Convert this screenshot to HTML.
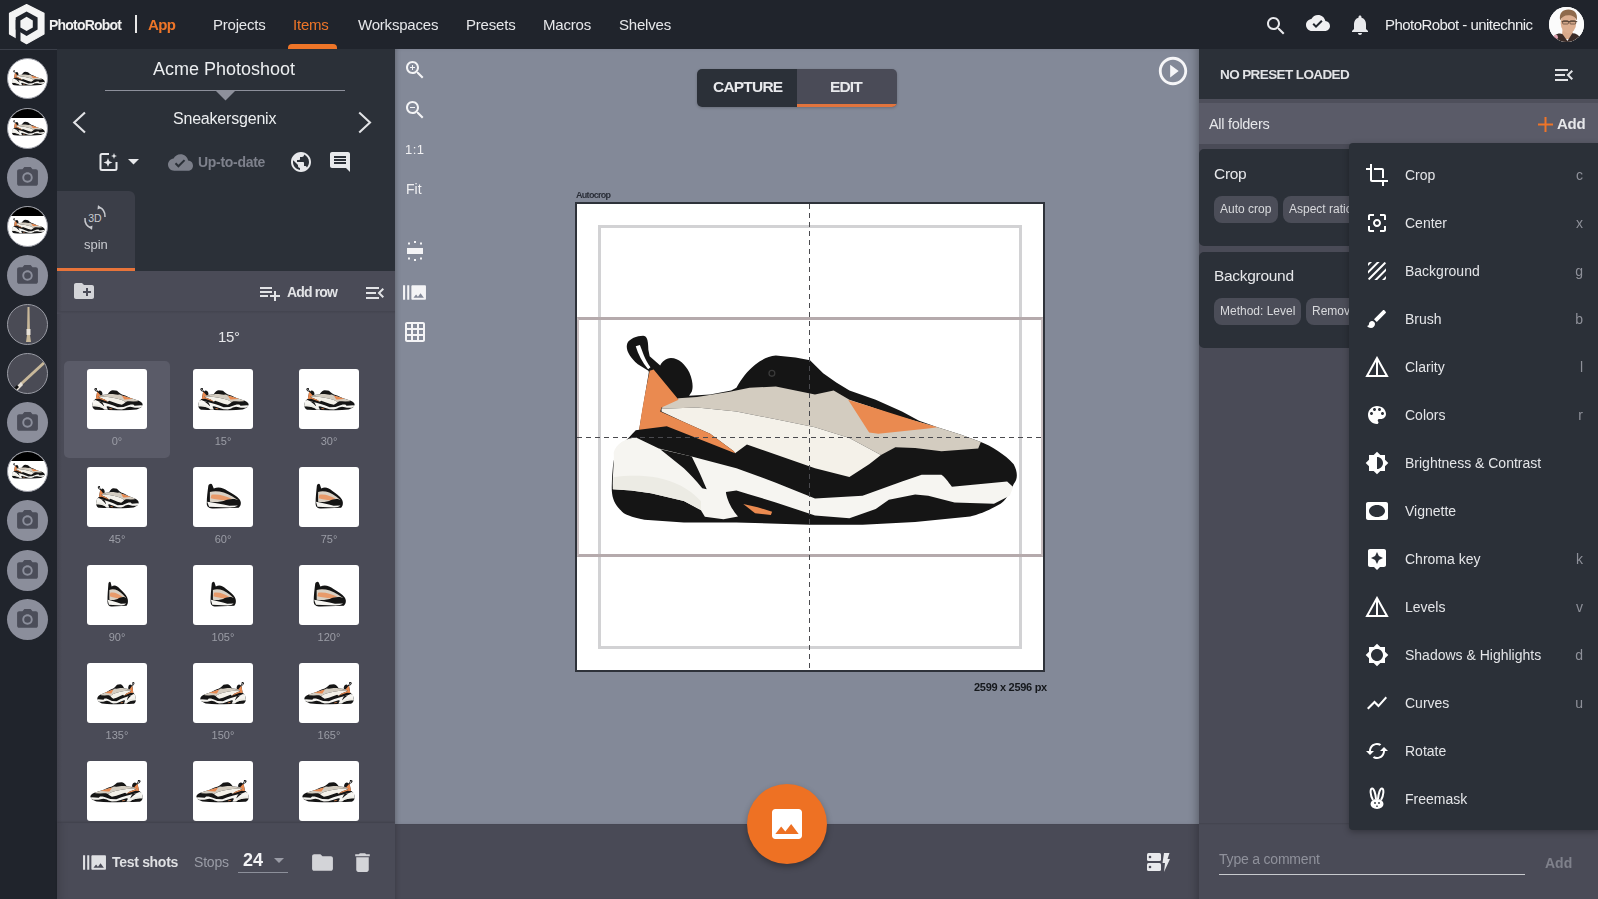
<!DOCTYPE html>
<html><head><meta charset="utf-8">
<style>
*{box-sizing:border-box;margin:0;padding:0}
html,body{width:1598px;height:899px;overflow:hidden;background:#20242c;font-family:"Liberation Sans",sans-serif;-webkit-font-smoothing:antialiased}
.t,.nav,.mi,.sc,.lbl,.chip{will-change:transform}
.a{position:absolute}
.t{position:absolute;white-space:nowrap;line-height:1}
.nav{position:absolute;top:17px;font-size:15px;line-height:1;color:#e6e7ea;white-space:nowrap;letter-spacing:-0.2px}
.circ{position:absolute;left:7px;width:41px;height:41px;border-radius:50%;overflow:hidden}
.thumb{position:absolute;width:60px;height:60px;background:#fff;border-radius:3px;overflow:hidden}
.lbl{position:absolute;width:60px;text-align:center;font-size:11px;line-height:1;color:#9b9da6}
.chip{position:absolute;height:27px;border-radius:8px;background:#4b4d58;color:#d8d9dc;font-size:12px;line-height:27px;padding:0 6px;white-space:nowrap;overflow:hidden}
.mi{position:absolute;left:1405px;font-size:14px;line-height:1;color:#e4e5e8;white-space:nowrap}
.sc{position:absolute;left:1560px;width:23px;text-align:right;font-size:14px;line-height:1;color:#8e9099}
</style></head><body>
<svg width="0" height="0" style="position:absolute"><defs><symbol id="shoe" viewBox="0 0 1598 799">
<path fill="#151515" d="M184 193 L144 168 C110 140 96 110 104 88 C112 72 140 60 164 60 C178 62 183 70 184 113 L189 138 L229 173 C236 160 250 146 270 145 C300 146 325 170 340 200 C355 235 354 260 349 273 L339 288 L419 283 L499 268 L519 258 C540 220 560 195 590 170 C615 150 640 138 669 135 L744 143 L799 153 L849 203 L899 238 L949 268 L1049 303 L1149 348 L1214 383 L1284 408 L1374 437 L1449 464 C1490 480 1540 510 1574 549 C1590 580 1590 605 1574 624 C1560 660 1540 690 1524 699 C1480 725 1430 745 1399 749 L1199 769 L999 779 L799 779 L519 770 L319 770 L169 760 C120 750 90 740 79 724 C55 700 47 680 45 650 C44 620 46 590 49 560 C52 530 58 510 64 500 C80 475 100 458 136 419 L149 418 L186 198 Z"/>
<path fill="#ffffff" d="M136 100 L152 95 C160 115 170 150 192 180 L183 187 C160 160 145 130 136 100 Z"/>
<path fill="#f6f5f1" d="M52 505 C60 470 100 449 137 447 L224 489 L349 519 L519 564 L669 619 L818 679 L999 669 L1149 614 L1224 589 L1299 589 C1320 605 1330 625 1339 634 L1549 614 L1572 635 L1559 669 L1499 699 L1349 694 L1249 669 L1199 664 L1099 684 L1049 719 L949 754 L818 744 L669 694 L569 664 L519 649 L479 654 C482 680 500 720 525 748 L470 758 L399 749 L384 724 L319 689 L194 659 L119 649 L49 644 C46 600 55 540 52 505 Z"/>
<path fill="#ecebe4" d="M52 598 C100 592 160 590 220 600 C280 612 340 640 384 690 L384 722 L319 689 L194 659 L119 649 L49 644 Z"/>
<path fill="#151515" d="M229 492 L349 519 C370 560 392 610 406 644 L389 640 C365 610 340 585 319 564 Z"/>
<path fill="#d3ccc0" d="M239 328 L299 298 L369 293 L494 273 L569 258 L669 253 L818 283 L889 268 L949 303 L1024 328 L1124 363 L1214 388 L1284 408 L1374 437 L1449 464 L1439 489 L1299 499 L1199 487 L1124 484 L1069 514 L949 449 L818 408 L669 378 L519 348 L369 333 L234 338 Z"/>
<path fill="#f4f1e9" d="M234 338 L369 333 L519 348 L669 378 L818 408 L949 449 L1069 514 L1024 549 L949 597 L818 564 L559 474 L514 507 L509 499 L419 433 L319 388 L234 348 Z"/>
<path fill="#ea8a50" d="M189 193 L204 188 L299 303 L234 333 L229 348 L319 388 L419 433 L509 499 L514 507 L254 404 L149 418 C160 340 175 260 189 193 Z"/>
<path fill="#ea8a50" d="M944 303 L1024 328 L1214 388 L1284 408 L1249 413 L1059 433 L1024 428 Z"/>
<path fill="#ea8a50" d="M545 700 L600 712 L655 730 L650 742 L590 735 Z"/>
<circle cx="654" cy="203" r="11" fill="none" stroke="#3a3a3a" stroke-width="5"/>
</symbol>

<g id="shoeq">
<path fill="#141414" d="M13 17 C14 15 17 14 18 16 L20 20 C26 18 32 19 38 23 C44 26 50 29 53 32 C56 35 55 40 52 41.5 L20 42.5 C14 42.5 10.5 40.5 11 36 C11 30 12 24 13 17 Z"/>
<path fill="#d8d0c4" d="M15 24 C24 22 34 24 44 29 L51 33 L36 33.5 C30 34.5 24 36 15 35 Z"/>
<path fill="#e89a6a" d="M17 27 C26 26 34 28 43 31.5 L35 33.5 C28 33 22 32 16 31 Z"/>
<path fill="#141414" d="M33 34 C40 31.5 48 31 53 34 L53.5 39 L37 39.5 Z"/>
<path fill="#f6f5f1" d="M11.5 35 C20 36 30 37.5 40 39.5 L51 39 C49 40.5 45 41 41 41.3 L14 40.5 Z"/>
</g></defs></svg>

<div class="a" style="left:0;top:0;width:1598px;height:49px;background:#20242c"></div>
<svg class="a" style="left:0;top:0" width="50" height="49" viewBox="0 0 50 49">
<path d="M26.6 4.6 L44 13.2 L44 34 L26.6 43.7 L9.5 34 L9.5 13.2 Z" fill="#f4f4f4" stroke="#f4f4f4" stroke-width="1.2" stroke-linejoin="round"/>
<path d="M26.6 11.5 L37.6 17.4 L37.6 29.6 L26.6 36 L15.7 29.6 L15.7 17.4 Z" fill="#20242c"/>
<path d="M15.7 20 L20.5 20 L20.5 44 L15.7 41 Z" fill="#20242c"/>
<path d="M26.6 16.8 L32.8 20.4 L32.8 27.4 L26.6 31 L20.4 27.4 L20.4 20.4 Z" fill="#f4f4f4"/>
</svg>
<div class="t" style="left:49px;top:18px;font-size:14px;font-weight:bold;color:#f0f0f0;letter-spacing:-0.8px">PhotoRobot</div>
<div class="a" style="left:135px;top:15px;width:2px;height:18px;background:#e8e8e8"></div>
<div class="t" style="left:148px;top:17px;font-size:15px;font-weight:bold;color:#ee7528;letter-spacing:-0.6px">App</div>
<div class="nav" style="left:213px;color:#e6e7ea">Projects</div>
<div class="nav" style="left:293px;color:#ee7528">Items</div>
<div class="nav" style="left:358px;color:#e6e7ea">Workspaces</div>
<div class="nav" style="left:466px;color:#e6e7ea">Presets</div>
<div class="nav" style="left:543px;color:#e6e7ea">Macros</div>
<div class="nav" style="left:619px;color:#e6e7ea">Shelves</div>
<div class="a" style="left:288px;top:44px;width:49px;height:5px;background:#ee7528;border-radius:4px 4px 0 0"></div>
<svg class="a" style="left:1264px;top:14px" width="24" height="24" viewBox="0 0 24 24"><path fill="#e8e9ec" d="M15.5 14h-.79l-.28-.27C15.41 12.59 16 11.11 16 9.5 16 5.91 13.09 3 9.5 3S3 5.91 3 9.5 5.91 16 9.5 16c1.61 0 3.09-.59 4.23-1.57l.27.28v.79l5 4.99L20.49 19l-4.99-5zm-6 0C7.01 14 5 11.99 5 9.5S7.01 5 9.5 5 14 7.01 14 9.5 11.99 14 9.5 14z"/></svg>
<svg class="a" style="left:1306px;top:11px" width="24" height="24" viewBox="0 0 24 24"><path fill="#f0f0f2" d="M19.35 10.04C18.67 6.59 15.64 4 12 4 9.11 4 6.6 5.64 5.35 8.04 2.34 8.36 0 10.91 0 14c0 3.31 2.69 6 6 6h13c2.76 0 5-2.24 5-5 0-2.64-2.05-4.78-4.65-4.96zM10 17l-3.5-3.5 1.41-1.41L10 14.17 15.18 9l1.41 1.41L10 17z"/></svg>
<svg class="a" style="left:1348px;top:13px" width="24" height="24" viewBox="0 0 24 24"><path fill="#e8e9ec" d="M12 22c1.1 0 2-.9 2-2h-4c0 1.1.89 2 2 2zm6-6v-5c0-3.07-1.64-5.64-4.5-6.32V4c0-.83-.67-1.5-1.5-1.5s-1.5.67-1.5 1.5v.68C7.63 5.36 6 7.92 6 11v5l-2 2v1h16v-1l-2-2z"/></svg>
<div class="t" style="left:1385px;top:17px;font-size:15px;color:#eeeff1;letter-spacing:-0.55px">PhotoRobot - unitechnic</div>
<div class="a" style="left:1549px;top:7px;width:35px;height:35px;border-radius:50%;background:#fafafa;overflow:hidden">
<svg width="35" height="35" viewBox="0 0 36 36"><rect width="36" height="36" fill="#fbfbfb"/>
<path d="M14 22 L24 22 L25 33 L13 33 Z" fill="#d9a98a"/>
<ellipse cx="20" cy="16.5" rx="8" ry="10.5" fill="#dcae90"/>
<path d="M11.5 14 C10 6 14 2.5 20 2.5 C26 2.5 30 6 28.5 14 C27 10 24 8.5 20 8.5 C15.5 8.5 13 10.5 11.5 14 Z" fill="#8f6a4c"/>
<path d="M13 15 H29" stroke="#5a4638" stroke-width="1"/><rect x="14" y="14" width="6" height="3.5" rx="1" fill="none" stroke="#5a4638" stroke-width="0.8"/><rect x="21.5" y="14" width="6" height="3.5" rx="1" fill="none" stroke="#5a4638" stroke-width="0.8"/>
<path d="M3 36 L6 29 C9 27 12 27 14 28 L19 35 L24 27 C28 27 31 29 33 33 L34 36 Z" fill="#3a2b27"/>
<ellipse cx="7" cy="31" rx="2.2" ry="2.5" fill="#e2a3b2"/>
</svg></div>
<div class="a" style="left:0;top:49px;width:57px;height:850px;background:#20242c;border-top:1px solid #3b3f49"></div>
<div class="circ" style="top:58px;background:#fff;border:1px solid #9a9ca5"><svg class="a" style="left:3px;top:10px" width="34" height="17" viewBox="0 0 1598 799"><use href="#shoe"/></svg></div>
<div class="circ" style="top:108px;background:#fff;border:1px solid #9a9ca5"><div class="a" style="left:0;top:0;width:41px;height:9px;background:#000"></div><svg class="a" style="left:3px;top:10px" width="34" height="17" viewBox="0 0 1598 799"><use href="#shoe"/></svg></div>
<div class="circ" style="top:157px;background:#8b8e9b"><svg class="a" style="left:8px;top:8px" width="25" height="25" viewBox="0 0 24 24"><path fill="#4b4d59" d="M12 15.2a3.2 3.2 0 1 0 0-6.4 3.2 3.2 0 0 0 0 6.4z M9 2L7.17 4H4c-1.1 0-2 .9-2 2v12c0 1.1.9 2 2 2h16c1.1 0 2-.9 2-2V6c0-1.1-.9-2-2-2h-3.17L15 2H9zm3 15c-2.76 0-5-2.24-5-5s2.24-5 5-5 5 2.24 5 5-2.24 5-5 5z"/></svg></div>
<div class="circ" style="top:206px;background:#fff;border:1px solid #9a9ca5"><div class="a" style="left:0;top:0;width:41px;height:9px;background:#000"></div><svg class="a" style="left:3px;top:10px" width="34" height="17" viewBox="0 0 1598 799"><use href="#shoe"/></svg></div>
<div class="circ" style="top:255px;background:#8b8e9b"><svg class="a" style="left:8px;top:8px" width="25" height="25" viewBox="0 0 24 24"><path fill="#4b4d59" d="M12 15.2a3.2 3.2 0 1 0 0-6.4 3.2 3.2 0 0 0 0 6.4z M9 2L7.17 4H4c-1.1 0-2 .9-2 2v12c0 1.1.9 2 2 2h16c1.1 0 2-.9 2-2V6c0-1.1-.9-2-2-2h-3.17L15 2H9zm3 15c-2.76 0-5-2.24-5-5s2.24-5 5-5 5 2.24 5 5-2.24 5-5 5z"/></svg></div>
<div class="circ" style="top:304px;background:#4a4b55;border:1px solid #9a9ca5"><svg class="a" style="left:0;top:0" width="41" height="41" viewBox="0 0 41 41"><path d="M19.5 2 L21.5 2 L22 30 L23 37 L18 37 L19 30 Z" fill="#c8b89a"/><rect x="18.5" y="24" width="4" height="6" fill="#e8e2d8"/></svg></div>
<div class="circ" style="top:353px;background:#4a4b55;border:1px solid #9a9ca5"><svg class="a" style="left:0;top:0" width="41" height="41" viewBox="0 0 41 41"><path d="M37 6 L39 8 L14 31 L12 29 Z" fill="#c8b89a"/><path d="M13 28 L15 31 L9 37 L6 35 Z" fill="#e8e2d8"/><path d="M9 31 L11 33 L8 36 L6 34Z" fill="#111"/></svg></div>
<div class="circ" style="top:402px;background:#8b8e9b"><svg class="a" style="left:8px;top:8px" width="25" height="25" viewBox="0 0 24 24"><path fill="#4b4d59" d="M12 15.2a3.2 3.2 0 1 0 0-6.4 3.2 3.2 0 0 0 0 6.4z M9 2L7.17 4H4c-1.1 0-2 .9-2 2v12c0 1.1.9 2 2 2h16c1.1 0 2-.9 2-2V6c0-1.1-.9-2-2-2h-3.17L15 2H9zm3 15c-2.76 0-5-2.24-5-5s2.24-5 5-5 5 2.24 5 5-2.24 5-5 5z"/></svg></div>
<div class="circ" style="top:451px;background:#fff;border:1px solid #9a9ca5"><div class="a" style="left:0;top:0;width:41px;height:9px;background:#000"></div><svg class="a" style="left:3px;top:10px" width="34" height="17" viewBox="0 0 1598 799"><use href="#shoe"/></svg></div>
<div class="circ" style="top:500px;background:#8b8e9b"><svg class="a" style="left:8px;top:8px" width="25" height="25" viewBox="0 0 24 24"><path fill="#4b4d59" d="M12 15.2a3.2 3.2 0 1 0 0-6.4 3.2 3.2 0 0 0 0 6.4z M9 2L7.17 4H4c-1.1 0-2 .9-2 2v12c0 1.1.9 2 2 2h16c1.1 0 2-.9 2-2V6c0-1.1-.9-2-2-2h-3.17L15 2H9zm3 15c-2.76 0-5-2.24-5-5s2.24-5 5-5 5 2.24 5 5-2.24 5-5 5z"/></svg></div>
<div class="circ" style="top:550px;background:#8b8e9b"><svg class="a" style="left:8px;top:8px" width="25" height="25" viewBox="0 0 24 24"><path fill="#4b4d59" d="M12 15.2a3.2 3.2 0 1 0 0-6.4 3.2 3.2 0 0 0 0 6.4z M9 2L7.17 4H4c-1.1 0-2 .9-2 2v12c0 1.1.9 2 2 2h16c1.1 0 2-.9 2-2V6c0-1.1-.9-2-2-2h-3.17L15 2H9zm3 15c-2.76 0-5-2.24-5-5s2.24-5 5-5 5 2.24 5 5-2.24 5-5 5z"/></svg></div>
<div class="circ" style="top:599px;background:#8b8e9b"><svg class="a" style="left:8px;top:8px" width="25" height="25" viewBox="0 0 24 24"><path fill="#4b4d59" d="M12 15.2a3.2 3.2 0 1 0 0-6.4 3.2 3.2 0 0 0 0 6.4z M9 2L7.17 4H4c-1.1 0-2 .9-2 2v12c0 1.1.9 2 2 2h16c1.1 0 2-.9 2-2V6c0-1.1-.9-2-2-2h-3.17L15 2H9zm3 15c-2.76 0-5-2.24-5-5s2.24-5 5-5 5 2.24 5 5-2.24 5-5 5z"/></svg></div>
<div class="a" style="left:57px;top:49px;width:338px;height:222px;background:#2b3038"></div>
<div class="t" style="left:153px;top:60px;font-size:18px;color:#eceef0;letter-spacing:0px">Acme Photoshoot</div>
<div class="a" style="left:105px;top:90px;width:240px;height:1px;background:#8d909b"></div>
<svg class="a" style="left:215px;top:90px" width="21" height="11" viewBox="0 0 21 11"><path d="M0 0 H21 L10.5 10.5 Z" fill="#8d909b"/></svg>
<div class="t" style="left:173px;top:111px;font-size:16px;color:#eceef0;letter-spacing:-0.2px">Sneakersgenix</div>
<svg class="a" style="left:70px;top:111px" width="18" height="23" viewBox="0 0 18 23"><path d="M14.2 2.2 L4.2 11.5 L14.2 20.8" fill="none" stroke="#e2e3e6" stroke-width="2.1" stroke-linecap="square"/></svg>
<svg class="a" style="left:356px;top:111px" width="18" height="23" viewBox="0 0 18 23"><path d="M4 2.2 L14 11.5 L4 20.8" fill="none" stroke="#e2e3e6" stroke-width="2.1" stroke-linecap="square"/></svg>
<svg class="a" style="left:99px;top:152px" width="20" height="20" viewBox="0 0 20 20">
<path d="M10 2 H3 Q1.5 2 1.5 3.5 V16.5 Q1.5 18 3 18 H16 Q17.5 18 17.5 16.5 V10" fill="none" stroke="#e8e9ec" stroke-width="2"/>
<path d="M9 6 L10.2 9.3 L13.5 10.5 L10.2 11.7 L9 15 L7.8 11.7 L4.5 10.5 L7.8 9.3Z" fill="#e8e9ec"/>
<path d="M15 1 L15.8 3.2 L18 4 L15.8 4.8 L15 7 L14.2 4.8 L12 4 L14.2 3.2Z" fill="#e8e9ec"/>
</svg>
<svg class="a" style="left:128px;top:159px" width="11" height="6" viewBox="0 0 11 6"><path d="M0 0 H11 L5.5 5.5Z" fill="#e8e9ec"/></svg>
<svg class="a" style="left:168px;top:150px" width="25" height="25" viewBox="0 0 24 24"><path fill="#7b7e89" d="M19.35 10.04C18.67 6.59 15.64 4 12 4 9.11 4 6.6 5.64 5.35 8.04 2.34 8.36 0 10.91 0 14c0 3.31 2.69 6 6 6h13c2.76 0 5-2.24 5-5 0-2.64-2.05-4.78-4.65-4.96zM10 17l-3.5-3.5 1.41-1.41L10 14.17 15.18 9l1.41 1.41L10 17z"/></svg>
<div class="t" style="left:198px;top:155px;font-size:14px;font-weight:bold;color:#7e818c;letter-spacing:-0.3px">Up-to-date</div>
<svg class="a" style="left:289px;top:150px" width="24" height="24" viewBox="0 0 24 24"><path fill="#e8e9ec" d="M12 2C6.48 2 2 6.48 2 12s4.48 10 10 10 10-4.48 10-10S17.52 2 12 2zm-1 17.93c-3.95-.49-7-3.85-7-7.930 0-.62.08-1.21.21-1.79L9 15v1c0 1.1.9 2 2 2v1.93zm6.9-2.54c-.26-.81-1-1.39-1.9-1.39h-1v-3c0-.55-.45-1-1-1H8v-2h2c.55 0 1-.45 1-1V7h2c1.1 0 2-.9 2-2v-.41c2.93 1.19 5 4.060 5 7.41 0 2.08-.8 3.97-2.1 5.39z"/></svg>
<svg class="a" style="left:328px;top:150px" width="24" height="24" viewBox="0 0 24 24"><path fill="#e8e9ec" d="M21.99 4c0-1.1-.89-2-1.99-2H4c-1.1 0-2 .9-2 2v12c0 1.1.9 2 2 2h14l4 4-.01-18zM18 14H6v-2h12v2zm0-3H6V9h12v2zm0-3H6V6h12v2z"/></svg>
<div class="a" style="left:57px;top:191px;width:78px;height:80px;background:#3b3e48;border-radius:0 6px 0 0;border-bottom:3px solid #e8743a"></div>
<svg class="a" style="left:82px;top:204px" width="26" height="27" viewBox="0 0 26 27">
<path d="M17 3 A10 10 0 0 1 23 13" fill="none" stroke="#c8cacf" stroke-width="1.5"/><path d="M16 1 L19 4 L15.5 5.5Z" fill="#c8cacf"/>
<path d="M9 24 A10 10 0 0 1 3 14" fill="none" stroke="#c8cacf" stroke-width="1.5"/><path d="M10 26 L7 23 L10.5 21.5Z" fill="#c8cacf"/>
<text x="13" y="17.5" text-anchor="middle" font-family="Liberation Sans" font-size="10.5" fill="#c8cacf">3D</text>
</svg>
<div class="t" style="left:84px;top:238px;font-size:13px;color:#c9cbd0">spin</div>
<div class="a" style="left:57px;top:271px;width:338px;height:628px;background:#4a4b57"></div>
<div class="a" style="left:57px;top:271px;width:5px;height:628px;background:linear-gradient(90deg,#42434e,#4a4b57)"></div>
<div class="a" style="left:57px;top:311px;width:338px;height:3px;background:linear-gradient(#43444f,#4a4b57)"></div>
<svg class="a" style="left:72px;top:279px" width="24" height="24" viewBox="0 0 24 24"><path fill="#d3d4d8" d="M20 6h-8l-2-2H4c-1.11 0-1.99.89-1.99 2L2 18c0 1.11.89 2 2 2h16c1.11 0 2-.89 2-2V8c0-1.110-.89-2-2-2zm-1 8h-3v3h-2v-3h-3v-2h3V9h2v3h3v2z"/></svg>
<svg class="a" style="left:258px;top:281px" width="24" height="24" viewBox="0 0 24 24"><path fill="#e2e3e6" d="M14 10H2v2h12v-2zm0-4H2v2h12V6zm4 8v-4h-2v4h-4v2h4v4h2v-4h4v-2h-4zM2 16h8v-2H2v2z"/></svg>
<div class="t" style="left:287px;top:285px;font-size:14px;font-weight:bold;color:#e2e3e6;letter-spacing:-0.85px">Add row</div>
<svg class="a" style="left:363px;top:281px" width="24" height="24" viewBox="0 0 24 24"><path fill="#e2e3e6" d="M3 18h13v-2H3v2zm0-5h10v-2H3v2zm0-7v2h13V6H3zm18 9.59L17.42 12 21 8.41 19.59 7l-5 5 5 5L21 15.59z"/></svg>
<div class="t" style="left:218px;top:329px;font-size:15px;color:#e6e7ea;letter-spacing:-0.3px">15°</div>
<div class="a" style="left:64px;top:361px;width:106px;height:97px;background:#5a5b68;border-radius:5px"></div>
<div class="thumb" style="left:87px;top:369px"><svg class="a" style="left:4.0px;top:16.5px;" width="52" height="25" viewBox="0 0 1598 799" preserveAspectRatio="none"><use href="#shoe"/></svg></div>
<div class="lbl" style="left:87px;top:436px">0°</div>
<div class="thumb" style="left:193px;top:369px"><svg class="a" style="left:4.0px;top:16.5px;" width="52" height="25" viewBox="0 0 1598 799" preserveAspectRatio="none"><use href="#shoe"/></svg></div>
<div class="lbl" style="left:193px;top:436px">15°</div>
<div class="thumb" style="left:299px;top:369px"><svg class="a" style="left:4.0px;top:16.5px;" width="52" height="25" viewBox="0 0 1598 799" preserveAspectRatio="none"><use href="#shoe"/></svg></div>
<div class="lbl" style="left:299px;top:436px">30°</div>
<div class="thumb" style="left:87px;top:467px"><svg class="a" style="left:8.0px;top:16.5px;" width="44" height="25" viewBox="0 0 1598 799" preserveAspectRatio="none"><use href="#shoe"/></svg></div>
<div class="lbl" style="left:87px;top:534px">45°</div>
<div class="thumb" style="left:193px;top:467px"><svg class="a" style="left:12.5px;top:16px;" width="35" height="26" viewBox="10 14 45 29" preserveAspectRatio="none"><use href="#shoeq"/></svg></div>
<div class="lbl" style="left:193px;top:534px">60°</div>
<div class="thumb" style="left:299px;top:467px"><svg class="a" style="left:16.0px;top:16px;" width="28" height="26" viewBox="10 14 45 29" preserveAspectRatio="none"><use href="#shoeq"/></svg></div>
<div class="lbl" style="left:299px;top:534px">75°</div>
<div class="thumb" style="left:87px;top:565px"><svg class="a" style="left:19.5px;top:16px;" width="21" height="26" viewBox="10 14 45 29" preserveAspectRatio="none"><use href="#shoeq"/></svg></div>
<div class="lbl" style="left:87px;top:632px">90°</div>
<div class="thumb" style="left:193px;top:565px"><svg class="a" style="left:17.0px;top:16px;" width="26" height="26" viewBox="10 14 45 29" preserveAspectRatio="none"><use href="#shoeq"/></svg></div>
<div class="lbl" style="left:193px;top:632px">105°</div>
<div class="thumb" style="left:299px;top:565px"><svg class="a" style="left:13.5px;top:16px;" width="33" height="26" viewBox="10 14 45 29" preserveAspectRatio="none"><use href="#shoeq"/></svg></div>
<div class="lbl" style="left:299px;top:632px">120°</div>
<div class="thumb" style="left:87px;top:663px"><svg class="a" style="left:10.0px;top:16.5px;transform:scaleX(-1);" width="40" height="25" viewBox="0 0 1598 799" preserveAspectRatio="none"><use href="#shoe"/></svg></div>
<div class="lbl" style="left:87px;top:730px">135°</div>
<div class="thumb" style="left:193px;top:663px"><svg class="a" style="left:6.5px;top:16.5px;transform:scaleX(-1);" width="47" height="25" viewBox="0 0 1598 799" preserveAspectRatio="none"><use href="#shoe"/></svg></div>
<div class="lbl" style="left:193px;top:730px">150°</div>
<div class="thumb" style="left:299px;top:663px"><svg class="a" style="left:4.5px;top:16.5px;transform:scaleX(-1);" width="51" height="25" viewBox="0 0 1598 799" preserveAspectRatio="none"><use href="#shoe"/></svg></div>
<div class="lbl" style="left:299px;top:730px">165°</div>
<div class="thumb" style="left:87px;top:761px"><svg class="a" style="left:3.0px;top:16.5px;transform:scaleX(-1);" width="54" height="25" viewBox="0 0 1598 799" preserveAspectRatio="none"><use href="#shoe"/></svg></div>
<div class="thumb" style="left:193px;top:761px"><svg class="a" style="left:3.0px;top:16.5px;transform:scaleX(-1);" width="54" height="25" viewBox="0 0 1598 799" preserveAspectRatio="none"><use href="#shoe"/></svg></div>
<div class="thumb" style="left:299px;top:761px"><svg class="a" style="left:3.0px;top:16.5px;transform:scaleX(-1);" width="54" height="25" viewBox="0 0 1598 799" preserveAspectRatio="none"><use href="#shoe"/></svg></div>
<div class="a" style="left:57px;top:823px;width:338px;height:76px;background:#4a4b57;box-shadow:0 -1px 2px rgba(0,0,0,0.15), inset 10px 0 10px -8px rgba(0,0,0,0.18)"></div>
<svg class="a" style="left:82px;top:850px" width="25" height="25" viewBox="0 0 24 24"><path fill="#dfe0e3" d="M1 5h2v14H1zm4 0h2v14H5zm17 0H10c-.55 0-1 .45-1 1v12c0 .55.45 1 1 1h12c.55 0 1-.45 1-1V6c0-.55-.45-1-1-1zM11 17l2.5-3.15L15.29 16l2.5-3.22L21 17H11z"/></svg>
<div class="t" style="left:112px;top:855px;font-size:14px;font-weight:bold;color:#dfe0e3;letter-spacing:-0.3px">Test shots</div>
<div class="t" style="left:194px;top:855px;font-size:14px;color:#9a9ca6;letter-spacing:-0.2px">Stops</div>
<div class="t" style="left:243px;top:851px;font-size:18px;font-weight:bold;color:#f4f4f6">24</div>
<svg class="a" style="left:274px;top:858px" width="10" height="5" viewBox="0 0 10 5"><path d="M0 0H10L5 5Z" fill="#9a9ca6"/></svg>
<div class="a" style="left:238px;top:872px;width:50px;height:1px;background:#8c8f9a"></div>
<svg class="a" style="left:310px;top:850px" width="25" height="25" viewBox="0 0 24 24"><path fill="#d3d4d8" d="M10 4H4c-1.1 0-1.99.9-1.99 2L2 18c0 1.1.9 2 2 2h16c1.1 0 2-.9 2-2V8c0-1.1-.9-2-2-2h-8l-2-2z"/></svg>
<svg class="a" style="left:350px;top:850px" width="25" height="25" viewBox="0 0 24 24"><path fill="#d3d4d8" d="M6 19c0 1.1.9 2 2 2h8c1.1 0 2-.9 2-2V7H6v12zM19 4h-3.5l-1-1h-5l-1 1H5v2h14V4z"/></svg>
<div class="a" style="left:395px;top:49px;width:804px;height:775px;background:#838998;box-shadow:inset 5px 0 5px -4px rgba(0,0,0,0.25), inset -8px 0 8px -6px rgba(0,0,0,0.3)"></div>
<svg class="a" style="left:403px;top:58px" width="24" height="24" viewBox="0 0 24 24"><path fill="#f4f4f6" d="M15.5 14h-.79l-.28-.27C15.41 12.59 16 11.11 16 9.5 16 5.91 13.09 3 9.5 3S3 5.91 3 9.5 5.91 16 9.5 16c1.61 0 3.09-.59 4.23-1.57l.27.28v.79l5 4.99L20.49 19l-4.99-5zm-6 0C7.01 14 5 11.99 5 9.5S7.01 5 9.5 5 14 7.01 14 9.5 11.99 14 9.5 14zm2.5-4h-2v2H9v-2H7V9h2V7h1v2h2v1z"/></svg>
<svg class="a" style="left:403px;top:98px" width="24" height="24" viewBox="0 0 24 24"><path fill="#f4f4f6" d="M15.5 14h-.79l-.28-.27C15.41 12.59 16 11.11 16 9.5 16 5.91 13.09 3 9.5 3S3 5.91 3 9.5 5.91 16 9.5 16c1.61 0 3.09-.59 4.23-1.57l.27.28v.79l5 4.99L20.49 19l-4.99-5zm-6 0C7.01 14 5 11.99 5 9.5S7.01 5 9.5 5 14 7.01 14 9.5 11.99 14 9.5 14zM7 9h5v1H7z"/></svg>
<div class="t" style="left:405px;top:143px;font-size:13px;color:#f0f0f2;letter-spacing:0.5px">1:1</div>
<div class="t" style="left:406px;top:182px;font-size:14px;color:#f0f0f2">Fit</div>
<svg class="a" style="left:405px;top:241px" width="20" height="20" viewBox="0 0 20 20">
<rect x="2" y="7" width="16" height="6" fill="#f4f4f6"/>
<g fill="#f4f4f6"><rect x="9" y="0" width="2" height="2"/><rect x="3" y="1.5" width="2" height="2"/><rect x="15" y="1.5" width="2" height="2"/><rect x="9" y="18" width="2" height="2"/><rect x="3" y="16.5" width="2" height="2"/><rect x="15" y="16.5" width="2" height="2"/></g>
</svg>
<svg class="a" style="left:402px;top:280px" width="25" height="25" viewBox="0 0 24 24"><path fill="#f4f4f6" d="M1 5h2v14H1zm4 0h2v14H5zm17 0H10c-.55 0-1 .45-1 1v12c0 .55.45 1 1 1h12c.55 0 1-.45 1-1V6c0-.55-.45-1-1-1zM11 17l2.5-3.15L15.29 16l2.5-3.22L21 17H11z"/></svg>
<svg class="a" style="left:403px;top:320px" width="24" height="24" viewBox="0 0 24 24"><path fill="#f4f4f6" d="M20 2H4c-1.1 0-2 .9-2 2v16c0 1.1.9 2 2 2h16c1.1 0 2-.9 2-2V4c0-1.1-.9-2-2-2zM8 20H4v-4h4v4zm0-6H4v-4h4v4zm0-6H4V4h4v4zm6 12h-4v-4h4v4zm0-6h-4v-4h4v4zm0-6h-4V4h4v4zm6 12h-4v-4h4v4zm0-6h-4v-4h4v4zm0-6h-4V4h4v4z"/></svg>
<div class="a" style="left:697px;top:69px;width:200px;height:38px;border-radius:5px;overflow:hidden;box-shadow:0 1px 3px rgba(0,0,0,0.2)"><div class="a" style="left:0;top:0;width:100px;height:38px;background:#2b3038"></div><div class="a" style="left:100px;top:0;width:100px;height:38px;background:#4a4b57;border-bottom:3px solid #e1743d"></div></div>
<div class="t" style="left:713px;top:79px;font-size:15.5px;font-weight:bold;color:#e8e9ec;letter-spacing:-0.8px">CAPTURE</div>
<div class="t" style="left:830px;top:79px;font-size:15.5px;font-weight:bold;color:#e8e9ec;letter-spacing:-0.9px">EDIT</div>
<svg class="a" style="left:1156px;top:54px" width="34" height="34" viewBox="0 0 24 24"><path fill="#f6f6f8" d="M10 16.5l6-4.5-6-4.5v9zM12 2C6.48 2 2 6.48 2 12s4.48 10 10 10 10-4.48 10-10S17.52 2 12 2zm0 18c-4.41 0-8-3.59-8-8s3.59-8 8-8 8 3.59 8 8-3.590 8-8 8z"/></svg>
<div class="t" style="left:576px;top:191px;font-size:9px;font-weight:bold;color:#2a2e38;letter-spacing:-0.7px">Autocrop</div>
<div class="a" style="left:575px;top:202px;width:470px;height:470px;background:#fff;border:2px solid #2e323a"></div>
<div class="a" style="left:598px;top:225px;width:424px;height:424px;border:3px solid #d2d2d4"></div>
<svg class="a" style="left:600px;top:320px" width="420" height="210" viewBox="0 0 1598 799"><use href="#shoe"/></svg>
<div class="a" style="left:577px;top:317px;width:466px;height:240px;border-top:3px solid #b5aaac;border-bottom:3px solid #b5aaac;border-left:2px solid #c9bfc1;border-right:2px solid #c9bfc1"></div>
<svg class="a" style="left:575px;top:202px" width="470" height="470" viewBox="0 0 470 470"><line x1="234.5" y1="2" x2="234.5" y2="468" stroke="#4a4a4e" stroke-width="1" stroke-dasharray="5 4"/><line x1="2" y1="235.5" x2="468" y2="235.5" stroke="#4a4a4e" stroke-width="1" stroke-dasharray="5 4"/></svg>
<div class="t" style="left:974px;top:682px;font-size:11px;font-weight:bold;color:#15181c;letter-spacing:-0.3px">2599 x 2596 px</div>
<div class="a" style="left:395px;top:824px;width:804px;height:75px;background:#494a56;box-shadow:inset 5px 0 5px -4px rgba(0,0,0,0.2), inset -10px 0 8px -8px rgba(0,0,0,0.25)"></div>
<div class="a" style="left:747px;top:784px;width:80px;height:80px;border-radius:50%;background:#ee7123;box-shadow:0 3px 6px rgba(0,0,0,0.3)"></div>
<svg class="a" style="left:767px;top:804px" width="40" height="40" viewBox="0 0 24 24"><path fill="#ffffff" d="M21 19V5c0-1.1-.9-2-2-2H5c-1.1 0-2 .9-2 2v14c0 1.1.9 2 2 2h14c1.1 0 2-.9 2-2zM8.5 13.5l2.5 3.01L14.5 12l4.5 6H5l3.5-4.5z"/></svg>
<svg class="a" style="left:1147px;top:853px" width="23" height="19" viewBox="0 0 23 19">
<rect x="0" y="0" width="14" height="8" rx="1.5" fill="#e8e9ec"/><rect x="0" y="10" width="14" height="8" rx="1.5" fill="#e8e9ec"/>
<circle cx="3" cy="4" r="1.3" fill="#4a4b57"/><circle cx="3" cy="14" r="1.3" fill="#4a4b57"/>
<path d="M17 0 H22.5 L20.5 6 H23 L17 19 L18 10 H15.5 Z" fill="#e8e9ec"/>
</svg>
<div class="a" style="left:1199px;top:49px;width:399px;height:850px;background:#4a4b57"></div>
<div class="a" style="left:1199px;top:49px;width:399px;height:50px;background:#2b3038"></div>
<div class="t" style="left:1220px;top:68px;font-size:13.5px;font-weight:bold;color:#e2e3e6;letter-spacing:-0.6px">NO PRESET LOADED</div>
<svg class="a" style="left:1552px;top:63px" width="24" height="24" viewBox="0 0 24 24"><path fill="#e2e3e6" d="M3 18h13v-2H3v2zm0-5h10v-2H3v2zm0-7v2h13V6H3zm18 9.59L17.42 12 21 8.41 19.59 7l-5 5 5 5L21 15.59z"/></svg>
<div class="a" style="left:1199px;top:99px;width:399px;height:5px;background:#4e4f5b"></div>
<div class="a" style="left:1199px;top:103px;width:399px;height:41px;background:#5a5b68"></div>
<div class="t" style="left:1209px;top:117px;font-size:14.5px;color:#e6e7ea;letter-spacing:-0.3px">All folders</div>
<svg class="a" style="left:1538px;top:117px" width="15" height="15" viewBox="0 0 15 15"><rect x="6.5" y="0" width="2" height="15" fill="#ee7528"/><rect x="0" y="6.5" width="15" height="2" fill="#ee7528"/></svg>
<div class="t" style="left:1557px;top:116px;font-size:15px;font-weight:bold;color:#e6e7ea;letter-spacing:-0.3px">Add</div>
<div class="a" style="left:1199px;top:149px;width:399px;height:97px;background:#2b3038;border-radius:5px"></div>
<div class="t" style="left:1214px;top:166px;font-size:15.5px;color:#e6e7ea;letter-spacing:-0.3px">Crop</div>
<div class="chip" style="left:1214px;top:196px;width:64px">Auto crop</div>
<div class="chip" style="left:1283px;top:196px;width:80px">Aspect ratio</div>
<div class="a" style="left:1199px;top:252px;width:399px;height:96px;background:#2b3038;border-radius:5px"></div>
<div class="t" style="left:1214px;top:268px;font-size:15.5px;color:#e6e7ea;letter-spacing:-0.3px">Background</div>
<div class="chip" style="left:1214px;top:298px;width:87px">Method: Level</div>
<div class="chip" style="left:1306px;top:298px;width:60px">Remove</div>
<div class="a" style="left:1199px;top:823px;width:399px;height:2px;background:linear-gradient(#42434e,#4a4b57)"></div>
<div class="t" style="left:1219px;top:852px;font-size:14px;color:#8f919b;letter-spacing:-0.2px">Type a comment</div>
<div class="a" style="left:1219px;top:874px;width:306px;height:1px;background:#c8cace"></div>
<div class="t" style="left:1545px;top:856px;font-size:14px;font-weight:bold;color:#7f818b">Add</div>
<div class="a" style="left:1349px;top:143px;width:249px;height:687px;background:#2b3038;border-radius:4px 0 0 4px;box-shadow:0 2px 6px rgba(0,0,0,0.3)"></div>
<svg class="a" style="left:1365px;top:163px" width="24" height="24" viewBox="0 0 24 24"><path fill="#ffffff" d="M17 15h2V7c0-1.1-.9-2-2-2H9v2h8v8zM7 17V1H5v4H1v2h4v10c0 1.1.9 2 2 2h10v4h2v-4h4v-2H7z"/></svg>
<div class="mi" style="top:168px">Crop</div>
<div class="sc" style="top:168px">c</div>
<svg class="a" style="left:1365px;top:211px" width="24" height="24" viewBox="0 0 24 24"><path fill="#ffffff" d="M5 15H3v4c0 1.1.9 2 2 2h4v-2H5v-4zM5 5h4V3H5c-1.1 0-2 .9-2 2v4h2V5zm14-2h-4v2h4v4h2V5c0-1.1-.9-2-2-2zm0 16h-4v2h4c1.1 0 2-.9 2-2v-4h-2v4zM12 8c-2.21 0-4 1.79-4 4s1.79 4 4 4 4-1.79 4-4-1.79-4-4-4zm0 6c-1.1 0-2-.9-2-2s.9-2 2-2 2 .9 2 2-.9 2-2 2z"/></svg>
<div class="mi" style="top:216px">Center</div>
<div class="sc" style="top:216px">x</div>
<svg class="a" style="left:1365px;top:259px" width="24" height="24" viewBox="0 0 24 24"><path fill="#ffffff" d="M19.51 3.08L3.08 19.51c.09.34.27.65.51.9.25.24.56.42.9.51L20.93 4.49c-.19-.69-.73-1.23-1.42-1.41zM11.88 3L3 11.88v2.83L14.71 3h-2.83zM5 3c-1.1 0-2 .9-2 2v2l4-4H5zm14 18c.55 0 1.05-.22 1.41-.59.37-.36.59-.86.59-1.41v-2l-4 4h2zm-9.71 0h2.83L21 12.12V9.29L9.29 21z"/></svg>
<div class="mi" style="top:264px">Background</div>
<div class="sc" style="top:264px">g</div>
<svg class="a" style="left:1365px;top:307px" width="24" height="24" viewBox="0 0 24 24"><path fill="#ffffff" d="M7 14c-1.66 0-3 1.34-3 3 0 1.31-1.16 2-2 2 .92 1.22 2.49 2 4 2 2.21 0 4-1.79 4-4 0-1.66-1.34-3-3-3zm13.71-9.37l-1.34-1.34c-.39-.39-1.02-.39-1.41 0L9 12.25 11.75 15l8.96-8.96c.39-.39.39-1.02 0-1.41z"/></svg>
<div class="mi" style="top:312px">Brush</div>
<div class="sc" style="top:312px">b</div>
<svg class="a" style="left:1365px;top:356px" width="24" height="22" viewBox="0 0 24 22"><path d="M12 2 L22 20 H2 Z" fill="none" stroke="#fff" stroke-width="2" stroke-linejoin="miter"/><rect x="11" y="3" width="2" height="17" fill="#fff"/></svg>
<div class="mi" style="top:360px">Clarity</div>
<div class="sc" style="top:360px">l</div>
<svg class="a" style="left:1365px;top:403px" width="24" height="24" viewBox="0 0 24 24"><path fill="#ffffff" d="M12 3c-4.97 0-9 4.03-9 9s4.03 9 9 9c.83 0 1.5-.67 1.5-1.5 0-.39-.15-.74-.39-1.01-.23-.26-.38-.61-.38-.99 0-.83.67-1.5 1.5-1.5H16c2.76 0 5-2.24 5-5 0-4.42-4.03-8-9-8zm-5.5 9c-.83 0-1.5-.67-1.5-1.5S5.67 9 6.5 9 8 9.67 8 10.5 7.33 12 6.5 12zm3-4C8.67 8 8 7.33 8 6.5S8.67 5 9.5 5s1.5.67 1.5 1.5S10.33 8 9.5 8zm5 0c-.83 0-1.5-.67-1.5-1.5S13.67 5 14.5 5s1.5.67 1.5 1.5S15.33 8 14.5 8zm3 4c-.83 0-1.5-.67-1.5-1.5S16.67 9 17.5 9s1.5.67 1.5 1.5-.67 1.5-1.5 1.5z"/></svg>
<div class="mi" style="top:408px">Colors</div>
<div class="sc" style="top:408px">r</div>
<svg class="a" style="left:1365px;top:451px" width="24" height="24" viewBox="0 0 24 24"><path fill="#ffffff" d="M20 15.31L23.31 12 20 8.69V4h-4.69L12 .69 8.69 4H4v4.69L.69 12 4 15.31V20h4.69L12 23.31 15.31 20H20v-4.69zM12 18V6c3.31 0 6 2.69 6 6s-2.69 6-6 6z"/></svg>
<div class="mi" style="top:456px">Brightness &amp; Contrast</div>
<svg class="a" style="left:1365px;top:499px" width="24" height="24" viewBox="0 0 24 24"><path fill="#ffffff" d="M21 3H3c-1.1 0-2 .9-2 2v14c0 1.1.9 2 2 2h18c1.1 0 2-.9 2-2V5c0-1.1-.9-2-2-2zm-9 15c-4.42 0-8-2.690-8-6s3.58-6 8-6 8 2.69 8 6-3.58 6-8 6z"/></svg>
<div class="mi" style="top:504px">Vignette</div>
<svg class="a" style="left:1365px;top:547px" width="24" height="24" viewBox="0 0 24 24"><path fill="#ffffff" d="M19 2H5c-1.1 0-2 .9-2 2v14c0 1.1.9 2 2 2h4l3 3 3-3h4c1.1 0 2-.9 2-2V4c0-1.1-.9-2-2-2zm-5.12 10.88L12 17l-1.88-4.12L6 11l4.12-1.88L12 5l1.88 4.12L18 11l-4.12 1.88z"/></svg>
<div class="mi" style="top:552px">Chroma key</div>
<div class="sc" style="top:552px">k</div>
<svg class="a" style="left:1365px;top:596px" width="24" height="22" viewBox="0 0 24 22"><path d="M12 2 L22 20 H2 Z" fill="none" stroke="#fff" stroke-width="2" stroke-linejoin="miter"/><rect x="11" y="3" width="2" height="17" fill="#fff"/></svg>
<div class="mi" style="top:600px">Levels</div>
<div class="sc" style="top:600px">v</div>
<svg class="a" style="left:1365px;top:643px" width="24" height="24" viewBox="0 0 24 24"><path fill="#ffffff" d="M20 15.31L23.31 12 20 8.69V4h-4.69L12 .69 8.69 4H4v4.69L.69 12 4 15.31V20h4.69L12 23.31 15.31 20H20v-4.69zM12 18c-3.31 0-6-2.69-6-6s2.69-6 6-6 6 2.69 6 6-2.69 6-6 6z"/></svg>
<div class="mi" style="top:648px">Shadows &amp; Highlights</div>
<div class="sc" style="top:648px">d</div>
<svg class="a" style="left:1365px;top:691px" width="24" height="24" viewBox="0 0 24 24"><path fill="#ffffff" d="M3.5 18.49l6-6.01 4 4L22 6.92l-1.41-1.41-7.09 7.97-4-4L2 16.99z"/></svg>
<div class="mi" style="top:696px">Curves</div>
<div class="sc" style="top:696px">u</div>
<svg class="a" style="left:1365px;top:739px" width="24" height="24" viewBox="0 0 24 24"><path fill="#ffffff" d="M19 8l-4 4h3c0 3.31-2.69 6-6 6-1.01 0-1.97-.25-2.8-.7l-1.46 1.46C8.97 19.54 10.43 20 12 20c4.42 0 8-3.580 8-8h3l-4-4zM6 12c0-3.31 2.69-6 6-6 1.01 0 1.97.25 2.8.7l1.46-1.46C15.03 4.46 13.57 4 12 4c-4.42 0-8 3.58-8 8H1l4 4 4-4H6z"/></svg>
<div class="mi" style="top:744px">Rotate</div>
<svg class="a" style="left:1367px;top:787px" width="20" height="24" viewBox="0 0 20 24"><path d="M6 13 C3 8 3 2 5 1.5 C7 1 8.5 7 9 12 M14 13 C17 8 17 2 15 1.5 C13 1 11.5 7 11 12" fill="none" stroke="#fff" stroke-width="2"/><ellipse cx="10" cy="17" rx="6.5" ry="5" fill="#fff"/><circle cx="8" cy="16" r="0.9" fill="#2b3038"/><circle cx="12" cy="16" r="0.9" fill="#2b3038"/><rect x="9.3" y="18.5" width="1.4" height="1.5" fill="#2b3038"/></svg>
<div class="mi" style="top:792px">Freemask</div>
</body></html>
